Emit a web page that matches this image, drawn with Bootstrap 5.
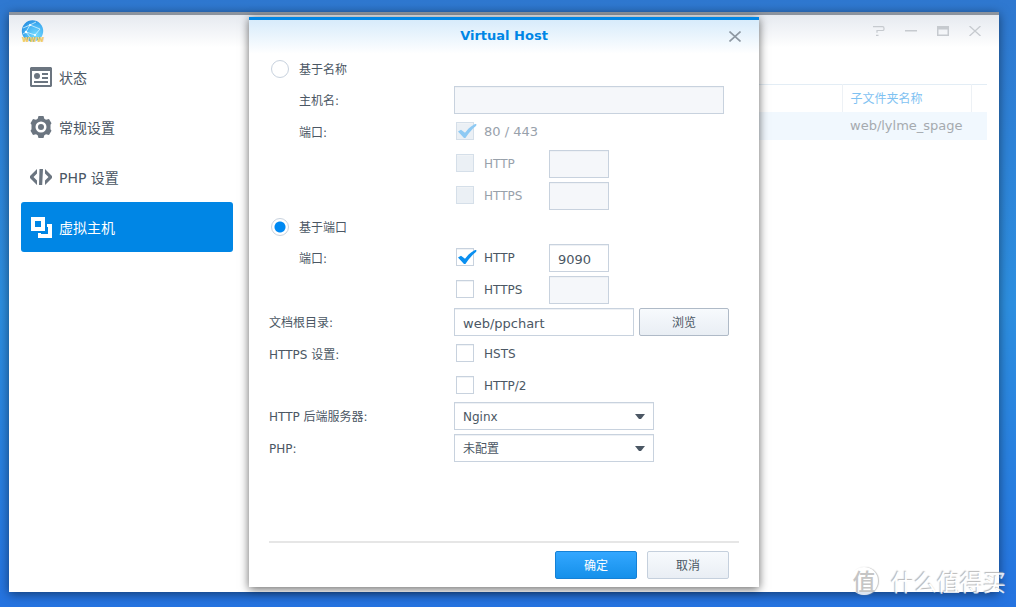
<!DOCTYPE html>
<html lang="zh-CN">
<head>
<meta charset="utf-8">
<meta name="viewport" content="width=device-width, initial-scale=1">
<title>Web Station</title>
<link href="https://cdn.jsdelivr.net/npm/bootstrap@5.3.0/dist/css/bootstrap.min.css" rel="stylesheet">
<style>
  :root { --ink: #4b5764; --line: #c8d2de; --accent: #0086e5; }
  body {
    font-family: "DejaVu Sans", "Noto Sans CJK SC", sans-serif;
    font-size: 12px; line-height: 20px; color: var(--ink);
    background: linear-gradient(to top, #2573e0, rgba(37,115,224,0) 50%), linear-gradient(to bottom, #2f78d0, #2d8fe0 50%);
    padding: 12px 17px 15px 9px;
  }
  .app-window { background: #fff; border-top: 3px solid #8b939e; box-shadow: 0 2px 10px rgba(0,0,0,.5); }
  .app-head { height: 37px; padding: 5px 8px 0 12px; background: linear-gradient(#e6eaf0, #fff 88%); color: #c6cacf; }
  .tool-btn { width: 32px; height: 22px; color: inherit; }
  .side-nav { width: 240px; padding-left: 12px; }
  .side-nav .nav-link {
    width: 212px; height: 50px; padding: 0 9px; gap: 7px; border-radius: 3px;
    font-size: 14px; line-height: 52px; color: var(--ink);
  }
  .side-nav svg { width: 22px; height: 24px; margin-top: 13px; color: #6b7580; }
  .side-nav .active { background: var(--accent); color: #fff; }
  .side-nav .active svg { color: #fff; }
  .host-pane { padding: 32px 12px 0 0; }
  .host-table { table-layout: fixed; border-top: 1px solid #e3edf5; }
  .host-table th { height: 27px; padding: 2px 8px 0; font-weight: 400; color: #7fc2f2; border-right: 1px solid #edf1f5; }
  .host-table th:last-child { border-right: 0; }
  .host-table td { height: 28px; padding: 0 8px; font-size: 13px; color: #a5aaaf; background: #f1f8fe; }
  .col-folder { width: 129px; }
  .col-end { width: 16px; }

  .dialog-layer { position: absolute; inset: 2px 0 5px; pointer-events: none; }
  .host-dialog { width: 510px; background: #fff; border-top: 3px solid var(--accent); box-shadow: 0 2px 9px rgba(0,0,0,.6); pointer-events: auto; }
  .dialog-head { height: 36px; padding: 0 14px 4px; background: linear-gradient(#d7ebfb, #fff 94%); }
  .dialog-head h1 { font-size: 13px; line-height: 20px; font-weight: 700; color: var(--accent); }
  .close-btn { width: 20px; height: 20px; color: #8d97a1; }
  .host-form { padding: 0 20px; gap: 4px; }
  .line-row { height: 28px; }
  .line-short { height: 26px; }
  .line-label { width: 185px; line-height: 30px; }
  .indent { padding-left: 30px; }
  .tick { width: 95px; height: 26px; padding-left: 2px; gap: 10px; line-height: 28px; }
  .tick.off { color: #98a1ab; }
  .tick.digits { font-size: 13px; }
  .pick { gap: 10px; padding-left: 2px; line-height: 28px; }

  .box, .dot { appearance: none; position: relative; flex: none; width: 18px; height: 18px; margin: 4px 0 0; background: #fff; border: 1px solid var(--line); }
  .box { box-shadow: inset 0 1px #f0f3f6; }
  .box:disabled { background: #ebf0f5; border-color: #d5dfe9; }
  .box:checked::after {
    content: ""; position: absolute; left: 0; top: 0; width: 20px; height: 16px; background: #0a8ff0;
    clip-path: polygon(5% 53%, 20% 42%, 40% 61%, 58% 35%, 72% 20%, 90% 7%, 97% 7%, 96% 17%, 80% 35%, 58% 66%, 42% 94%, 35% 94%);
  }
  .box:disabled::after { background: #8ecaf4; }
  .dot { border-radius: 50%; }
  .dot:checked { background: radial-gradient(circle, #0089f2 0 5px, #fff 6px); }
  .entry {
    height: 28px; padding: 2px 8px 0; border: 1px solid var(--line); border-radius: 0;
    font-size: 13px; line-height: 20px; color: var(--ink); background: #fff; box-shadow: inset 0 1px #eef1f5;
  }
  .entry:disabled { background: #f5f7fa; }
  .w-host { width: 270px; }
  .w-port { width: 60px; }
  .w-root { width: 180px; }
  .choice {
    appearance: none; width: 200px; height: 28px; padding: 2px 24px 0 8px; border: 1px solid var(--line); border-radius: 0;
    color: var(--ink); font-size: 12px; box-shadow: inset 0 1px #eef1f5;
    background: #fff url("data:image/svg+xml,%3Csvg xmlns='http://www.w3.org/2000/svg' width='10' height='5'%3E%3Cpath d='M0 0h10L6 5H4z' fill='%234b5764'/%3E%3C/svg%3E") no-repeat right 8px center;
  }
  .push { height: 28px; padding: 0; font-size: 12px; line-height: 28px; border-radius: 2px; width: 82px; }
  .push-plain { color: var(--ink); border: 1px solid #c5d0dd; background: linear-gradient(#f7fafd, #e9eef4); }
  .push-browse { width: 90px; border-color: #afbac7; margin-left: 5px; }
  .push-main { color: #fff; border: 1px solid #1581d6; background: linear-gradient(#33a7ff, #1590ea); }
  .dialog-foot { margin: 0 20px; padding: 8px 10px 8px 0; gap: 10px; border-top: 2px solid #e6e6e6; }

  .watermark { position: absolute; right: 10px; bottom: 9px; gap: 13px; font-family: "Noto Sans CJK SC", sans-serif; font-size: 23px; line-height: 34px; color: #fff; text-shadow: -1px -1px 1px #aaa; opacity: .85; }
  .watermark .seal { width: 28px; height: 28px; line-height: 26px; border-radius: 50%; background: #fff; box-shadow: 1px 0 1px #bbb; color: #bbb; font-weight: 500; text-shadow: none; }
</style>
</head>
<body class="vh-100 d-flex position-relative overflow-hidden">
<div class="app-window flex-grow-1 d-flex flex-column position-relative">
  <header class="app-head d-flex justify-content-between align-items-start">
    <svg width="24" height="24" viewBox="0 0 24 24" aria-hidden="true">
      <defs><radialGradient id="globe" cx=".65" cy=".7" r=".8"><stop stop-color="#75dcff"/><stop offset=".6" stop-color="#46b2f3"/><stop offset="1" stop-color="#2289dd"/></radialGradient></defs>
      <circle cx="11.500" cy="11" r="10.700" fill="url(#globe)"/>
      <g fill="none" stroke="#d6f4ff" stroke-width=".8"><path d="M2 8l7-3 6-3M9 5l-4 7 4 5M5 12l9 3 5-6M9 5l10 4M2 14l3-2"/></g>
      <g fill="#fff"><circle cx="9" cy="5" r="1"/><circle cx="5" cy="12" r="1.200"/><circle cx="14" cy="15" r="1"/></g>
      <text x="12" y="22" text-anchor="middle" font-size="8" font-weight="700" font-family="DejaVu Sans, sans-serif" fill="#fbd66e" stroke="#c9a040" stroke-width=".2">www</text>
    </svg>
    <div class="d-flex">
      <button class="tool-btn btn p-0 border-0 d-flex justify-content-center align-items-center" aria-label="帮助"><svg width="12" height="10" fill="none" stroke="currentColor"><path d="M0 .700h9.500q1.500 0 1.500 1.500v1q0 1.300-1.500 1.300H4v2.200M3 9.300h2.500" stroke-width="1.200"/></svg></button>
      <button class="tool-btn btn p-0 border-0 d-flex justify-content-center align-items-center" aria-label="最小化"><svg width="12" height="10"><path d="M0 4h12v1.500H0z" fill="currentColor"/></svg></button>
      <button class="tool-btn btn p-0 border-0 d-flex justify-content-center align-items-center" aria-label="最大化"><svg width="12" height="10"><path fill-rule="evenodd" d="M0 0h12v10H0zM1.500 3.500v5h9v-5z" fill="currentColor"/></svg></button>
      <button class="tool-btn btn p-0 border-0 d-flex justify-content-center align-items-center" aria-label="关闭"><svg width="12" height="10" stroke="currentColor"><path d="M.5 0l11 10M11.500 0l-11 10" stroke-width="1.300"/></svg></button>
    </div>
  </header>
  <div class="d-flex flex-grow-1">
    <nav class="side-nav nav flex-column flex-nowrap flex-shrink-0">
      <a class="nav-link d-flex align-items-start" href="#"><svg viewBox="0 0 22 24"><path fill="currentColor" fill-rule="evenodd" d="M1 2h20l1 1v18l-1 1H1l-1-1V3zM2 6v14h18V6zM4 16h14v2H4zM12 8h6v2h-6zM12 12h6v2h-6z"/><circle cx="7" cy="11" r="3" fill="currentColor"/></svg>状态</a>
      <a class="nav-link d-flex align-items-start" href="#"><svg viewBox="0 0 22 24"><g fill="currentColor"><path fill-rule="evenodd" d="M8.500 1h5l.8 2.800 1.700 1 3-.8 2.500 4.200-1 1.500v4.600l1 1.500L19 20l-3-.8-1.700 1-.8 2.800h-5l-.8-2.800-1.700-1L3 20 .5 15.800l1-1.500V9.700l-1-1.500L3 4l3 .8 1.700-1zM11 6.500a5.500 5.500 0 1 0 0 11 5.500 5.500 0 0 0 0-11z"/><circle cx="11" cy="12" r="3"/></g></svg>常规设置</a>
      <a class="nav-link d-flex align-items-start" href="#"><svg viewBox="0 0 22 24"><path fill="currentColor" d="M7 4v4.500L3.500 12 7 15.500V20L0 13v-2zM15 4v4.500l3.500 3.500-3.500 3.500V20l7-7v-2zM9.500 4H13l-.8 16H9z"/></svg>PHP 设置</a>
      <a class="nav-link active d-flex align-items-start" href="#" aria-current="page"><svg viewBox="0 0 22 24"><path fill="currentColor" fill-rule="evenodd" d="M1 2h14v14H1zM5 6v6h6V6zM17 9h5v14H8v-5h3v1h7v-7h-1z"/></svg>虚拟主机</a>
    </nav>
    <main class="host-pane flex-grow-1">
      <table class="host-table w-100">
        <colgroup><col><col class="col-folder"><col class="col-end"></colgroup>
        <thead><tr><th></th><th scope="col">子文件夹名称</th><th></th></tr></thead>
        <tbody><tr><td></td><td>web/lylme_spage</td><td></td></tr></tbody>
      </table>
    </main>
  </div>

  <div class="dialog-layer d-flex justify-content-center">
    <form class="host-dialog d-flex flex-column" role="dialog" aria-labelledby="dialog-title">
      <div class="dialog-head d-flex align-items-center justify-content-between flex-shrink-0">
        <span class="close-btn"></span>
        <h1 id="dialog-title" class="m-0">Virtual Host</h1>
        <button type="button" class="close-btn btn p-0 border-0 d-flex align-items-center justify-content-center" aria-label="关闭"><svg width="12" height="11" stroke="currentColor"><path d="M.5.500l11 10M11.500.500l-11 10" stroke-width="1.600"/></svg></button>
      </div>
      <div class="host-form d-flex flex-column flex-grow-1">
        <label class="line-short pick d-flex align-items-start"><input class="dot" type="radio" name="mode">基于名称</label>
        <div class="line-row d-flex">
          <label class="line-label indent" for="host">主机名:</label>
          <input id="host" class="entry w-host" type="text" disabled>
        </div>
        <div class="line-row d-flex">
          <span class="line-label indent">端口:</span>
          <label class="tick off digits d-flex align-items-start text-nowrap"><input class="box" type="checkbox" checked disabled>80 / 443</label>
        </div>
        <div class="line-row d-flex">
          <span class="line-label"></span>
          <label class="tick off d-flex align-items-start"><input class="box" type="checkbox" disabled>HTTP</label>
          <input class="entry w-port" type="text" aria-label="HTTP" disabled>
        </div>
        <div class="line-row d-flex">
          <span class="line-label"></span>
          <label class="tick off d-flex align-items-start"><input class="box" type="checkbox" disabled>HTTPS</label>
          <input class="entry w-port" type="text" aria-label="HTTPS" disabled>
        </div>
        <label class="line-short pick d-flex align-items-start"><input class="dot" type="radio" name="mode" checked>基于端口</label>
        <div class="line-row d-flex">
          <span class="line-label indent">端口:</span>
          <label class="tick d-flex align-items-start"><input class="box" type="checkbox" checked>HTTP</label>
          <input class="entry w-port" type="text" aria-label="HTTP" value="9090">
        </div>
        <div class="line-row d-flex">
          <span class="line-label"></span>
          <label class="tick d-flex align-items-start"><input class="box" type="checkbox">HTTPS</label>
          <input class="entry w-port" type="text" aria-label="HTTPS" disabled>
        </div>
        <div class="line-row d-flex">
          <label class="line-label" for="root">文档根目录:</label>
          <input id="root" class="entry w-root" type="text" value="web/ppchart">
          <button type="button" class="btn push push-plain push-browse">浏览</button>
        </div>
        <div class="line-row d-flex">
          <span class="line-label">HTTPS 设置:</span>
          <label class="tick d-flex align-items-start"><input class="box" type="checkbox">HSTS</label>
        </div>
        <div class="line-short d-flex">
          <span class="line-label"></span>
          <label class="tick d-flex align-items-start"><input class="box" type="checkbox">HTTP/2</label>
        </div>
        <div class="line-row d-flex">
          <label class="line-label" for="backend">HTTP 后端服务器:</label>
          <select id="backend" class="choice"><option>Nginx</option></select>
        </div>
        <div class="line-row d-flex">
          <label class="line-label" for="php">PHP:</label>
          <select id="php" class="choice"><option>未配置</option></select>
        </div>
      </div>
      <div class="dialog-foot d-flex justify-content-end">
        <button type="button" class="btn push push-main">确定</button>
        <button type="button" class="btn push push-plain">取消</button>
      </div>
    </form>
  </div>
</div>
<div class="watermark d-flex align-items-center text-nowrap"><span class="seal text-center">值</span><span>什么值得买</span></div>
<script src="https://cdn.jsdelivr.net/npm/bootstrap@5.3.0/dist/js/bootstrap.bundle.min.js"></script>
</body>
</html>
